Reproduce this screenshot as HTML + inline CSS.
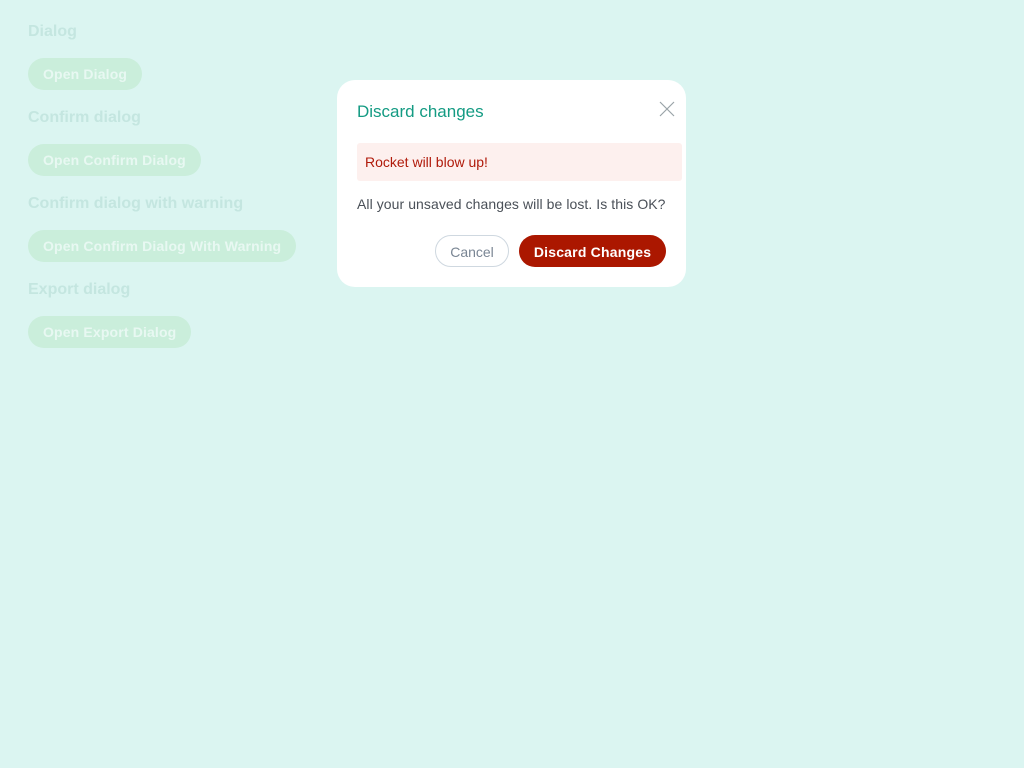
<!DOCTYPE html>
<html><head><style>
*{margin:0;padding:0;box-sizing:border-box}
body{width:1024px;height:768px;background:#dbf5f1;font-family:"Liberation Sans",sans-serif;position:relative;overflow:hidden}
.h{position:absolute;left:28px;font-size:16px;font-weight:bold;color:#c4e6e0}
.b{position:absolute;left:28px;height:32px;border-radius:16px;background:#caeedb;color:#e8f8f2;font-weight:bold;font-size:14px;line-height:33px;padding:0 15px;letter-spacing:0.15px}
.dlg{position:absolute;left:337px;top:80px;width:349px;height:207px;background:#fff;border-radius:18px}
</style></head><body>
<div class="h" style="top:23px">Dialog</div>
<div class="b" style="top:58px">Open Dialog</div>
<div class="h" style="top:109px">Confirm dialog</div>
<div class="b" style="top:144px">Open Confirm Dialog</div>
<div class="h" style="top:195px">Confirm dialog with warning</div>
<div class="b" style="top:230px">Open Confirm Dialog With Warning</div>
<div class="h" style="top:281px">Export dialog</div>
<div class="b" style="top:316px">Open Export Dialog</div>
<div class="dlg">
<div style="position:absolute;left:20px;top:22px;font-size:17px;color:#149b83">Discard changes</div>
<svg style="position:absolute;left:322px;top:21px" width="16" height="16" viewBox="0 0 16 16"><path d="M1 1L15 15M15 1L1 15" stroke="#9aa3a8" stroke-width="1.2"/></svg>
<div style="position:absolute;left:20px;top:63px;width:325px;height:38px;background:#fdf0ee;border-radius:3px;color:#b01a0a;font-size:14px;line-height:38px;padding-left:8px">Rocket will blow up!</div>
<div style="position:absolute;left:20px;top:116px;font-size:14px;color:#4a5058;letter-spacing:0.07px">All your unsaved changes will be lost. Is this OK?</div>
<div style="position:absolute;left:98px;top:155px;width:74px;height:32px;border:1px solid #cfd8e0;border-radius:16px;color:#7a8694;font-size:14px;line-height:32px;text-align:center">Cancel</div>
<div style="position:absolute;left:182px;top:155px;width:147px;height:32px;background:#ab1700;border-radius:16px;color:#fff;font-weight:bold;font-size:14px;line-height:34px;text-align:center;letter-spacing:0.2px">Discard Changes</div>
</div>
</body></html>
